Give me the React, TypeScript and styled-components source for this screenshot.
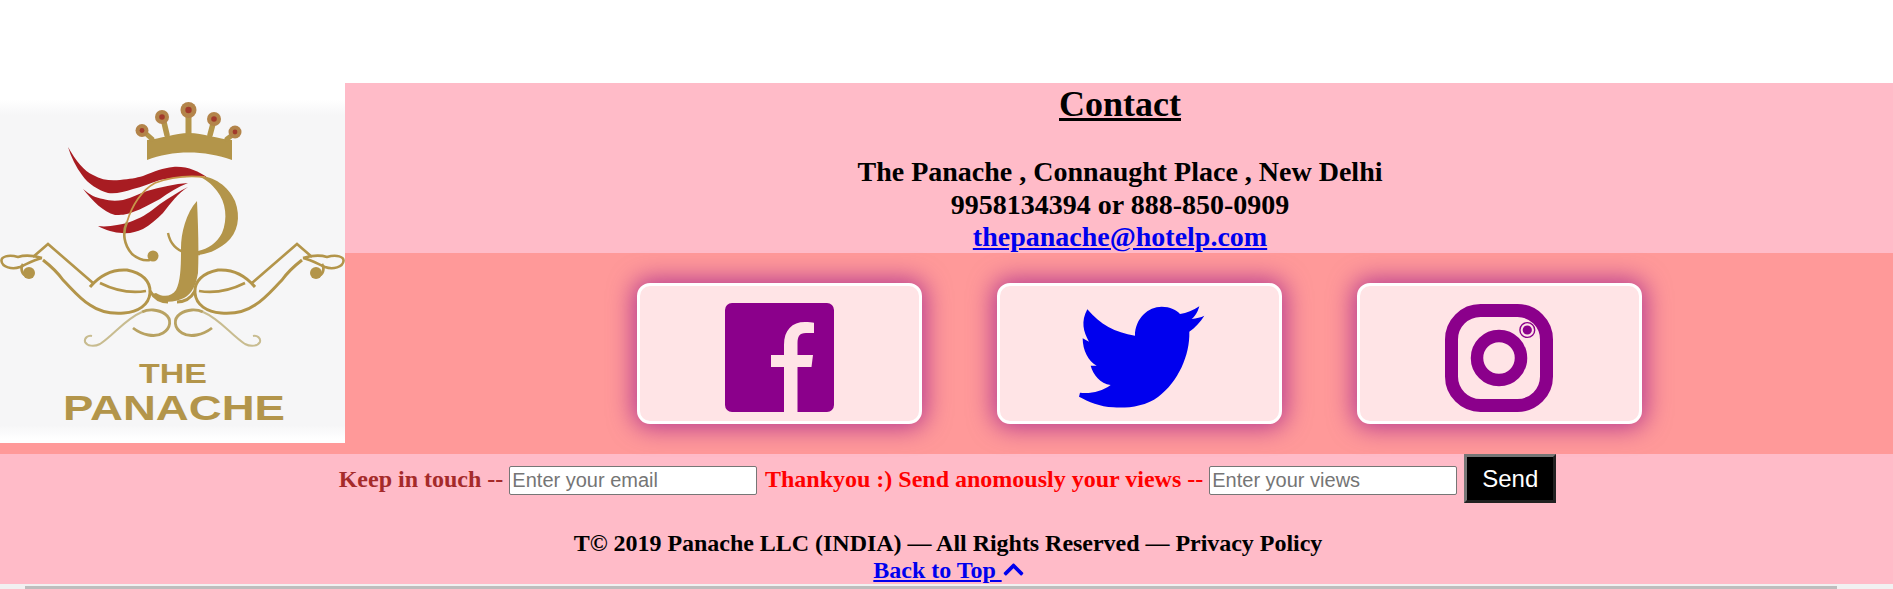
import React from "react";
import styled, { createGlobalStyle } from "styled-components";
import { FaChevronUp } from "react-icons/fa";

const Global = createGlobalStyle`
  html, body { margin: 0; padding: 0; background: #fff; overflow: hidden; }
  body { font-family: "Liberation Serif", "Times New Roman", serif; }
`;

const Page = styled.div`
  width: 1893px;
  height: 589px;
  padding-top: 83px;
  box-sizing: border-box;
  overflow: hidden;
  background: #fff;
`;

const TopGrid = styled.section`
  display: grid;
  grid-template-columns: 345px 1fr;
  background: #ff9999;
`;

const LogoColumn = styled.div`
  height: 360px;
  margin-bottom: 11px;
  background: #fff;
  line-height: 0;
`;

const RightColumn = styled.div`
  display: flex;
  flex-direction: column;
`;

const ContactPanel = styled.div`
  height: 170px;
  padding-left: 2px;
  box-sizing: border-box;
  background: #ffbbc8;
  text-align: center;
  overflow: hidden;
`;

const ContactTitle = styled.div`
  font-size: 36px;
  line-height: 42px;
  font-weight: bold;
  text-decoration: underline;
  margin-bottom: 31px;
`;

const ContactLine = styled.div`
  font-size: 28px;
  line-height: 32.5px;
  font-weight: bold;
  color: #000;
`;

const MailLink = styled.a`
  color: #0000ee;
  text-decoration: underline;
`;

const CardRow = styled.div`
  display: flex;
  justify-content: center;
  gap: 75px;
  padding: 30px 0 30px 40px;
`;

const Card = styled.a`
  width: 285px;
  height: 141px;
  box-sizing: border-box;
  padding-top: 8px;
  display: flex;
  align-items: center;
  justify-content: center;
  background: #ffe4e6;
  border: 3px solid #fff;
  border-radius: 13px;
  box-shadow: 0 0 25px 4px rgba(139, 0, 139, 0.62);
`;

const Footer = styled.footer`
  height: 130px;
  background: #ffbbc8;
  text-align: center;
  font-weight: bold;
  font-size: 24px;
`;

const FormLine = styled.form`
  height: 76px;
  margin: 0;
  padding-left: 2px;
`;

const Brown = styled.span`
  color: #a52a2a;
`;

const Red = styled.span`
  margin-left: 2px;
  color: #ff0000;
`;

const Field = styled.input`
  width: 248px;
  height: 29px;
  box-sizing: border-box;
  padding: 1px 2px;
  border: 1px solid #767676;
  border-radius: 2px;
  background: #fff;
  font-family: "Liberation Sans", Arial, sans-serif;
  font-size: 20px;
  &::placeholder { color: #757575; opacity: 1; }
`;

const SendButton = styled.button`
  padding: 8px 15px;
  margin-left: 1px;
  background: #000;
  color: #fff;
  border: 3px outset #767676;
  font-family: "Liberation Sans", Arial, sans-serif;
  font-size: 24px;
  line-height: 27px;
`;

const FooterLine = styled.div<{ $shift: number }>`
  padding-left: ${(p) => p.$shift}px;
  line-height: 27px;
  letter-spacing: -0.03px;
  color: #000;
`;

const TopLink = styled.a`
  color: #0000ee;
  text-decoration: underline;
`;

const Chevron = styled(FaChevronUp)`
  color: #0000ee;
  font-size: 23px;
  vertical-align: -3px;
`;

const BottomStrip = styled.div`
  height: 5px;
  padding-top: 2px;
  box-sizing: border-box;
  background: #f1f1f1;
`;

const Rule = styled.div`
  width: 1812px;
  height: 3px;
  margin-left: 25px;
  background: #bdbdbd;
`;

const gold = "#b3954a";

const Flourish = () => (
  <g fill="none" stroke={gold}>
    <path strokeWidth="2.6" d="M42 175 C32 172 24 172 18 174 C8 171 1 174 1.5 178 C2 184 12 187 20 184 C27 181 33 177 42 175" />
    <path strokeWidth="2.6" d="M33 174 L48 161 L93 200" />
    <path strokeWidth="3" d="M43 177 C52 184 58 190 63 197 C72 206 80 216 90 222 C100 229 112 231 124 230 C138 229 149 222 150 210 C151 198 142 190 127 187 C112 186 100 192 90 204" />
    <path strokeWidth="2.6" d="M100 200 C112 206 128 211 146 208" />
    <path strokeWidth="3" d="M150 208 C154 215 160 219 168 219" />
    <path strokeWidth="2.6" d="M23 181 C20 186 22 192 27 193" />
    <circle cx="29" cy="190" r="6" fill={gold} stroke="none" />
  </g>
);

const LogoText = styled.text`
  font-family: "Liberation Sans", Arial, sans-serif;
  font-weight: bold;
  fill: ${gold};
`;

const Logo = () => (
  <svg width="345" height="360" viewBox="0 0 345 360">
    <defs>
      <linearGradient id="logoFade" x1="0" y1="0" x2="0" y2="1">
        <stop offset="0" stopColor="#ffffff" />
        <stop offset="0.045" stopColor="#ffffff" />
        <stop offset="0.09" stopColor="#f6f6f7" />
        <stop offset="0.95" stopColor="#f6f6f7" />
        <stop offset="0.99" stopColor="#ffffff" />
      </linearGradient>
    </defs>
    <rect width="345" height="360" fill="url(#logoFade)" />

    {/* crown */}
    <path fill={gold} d="M147 57 C160 56 175 50 189 50 C203 50 218 56 232 57 L232 77 C205 67 172 67 147 77 Z" />
    <g fill="none" stroke={gold} strokeLinecap="round">
      <path strokeWidth="5" d="M152 56 L143 48" />
      <path strokeWidth="5.5" d="M167 52 L163 35" />
      <path strokeWidth="6" d="M188.5 51 L188.5 28" />
      <path strokeWidth="5.5" d="M210 52 L214 37" />
      <path strokeWidth="5" d="M227 56 L235 50" />
    </g>
    <g fill="#b3844a">
      <circle cx="142" cy="47.5" r="6.5" />
      <circle cx="162" cy="34" r="7" />
      <circle cx="188.5" cy="27" r="8" />
      <circle cx="214" cy="36" r="7" />
      <circle cx="235" cy="49" r="6.5" />
    </g>
    <g fill="#a23a2c">
      <circle cx="142" cy="47.5" r="2.4" />
      <circle cx="162" cy="34" r="2.8" />
      <circle cx="188.5" cy="27" r="3.2" />
      <circle cx="214" cy="36" r="2.8" />
      <circle cx="235" cy="49" r="2.4" />
    </g>

    {/* wings */}
    <g fill="#a81c22">
      <path d="M68 64 C76 78 84 88 93 92 C102 97 110 98 120 97 C130 96 136 95 143 93 C155 88 163 85 173 84 C187 83 198 88 208 95 C200 93 194 93 187 94 C178 94 170 95 160 97 C150 100 142 104 133 106 C124 109 116 111 108 110 C98 107 88 101 82 92 C76 84 71 74 68 64 Z" />
      <path d="M83 106 C90 112 96 115 103 116 C110 118 116 118 123 117 C132 115 140 110 147 108 C160 104 175 101 188 100 C178 104 168 110 160 116 C150 121 142 126 133 129 C126 132 120 132 115 132 C103 129 93 118 83 106 Z" />
      <path d="M98 143 C105 144 111 143 117 142 C125 141 131 139 137 136 C147 132 153 126 160 121 C170 114 180 108 188 104 C178 110 171 120 163 130 C157 136 150 142 143 146 C136 149 129 151 122 150 C115 150 105 147 98 143 Z" />
    </g>

    {/* P */}
    <path fill={gold} d="M198 93 C214 93 228 103 235 118 C241 134 238 150 226 160 C216 168 207 171 198 172 L198 168 C208 166 217 160 222 150 C228 136 226 119 217 108 C211 100 205 96 198 93 Z" />
    <path fill="none" stroke="#c8964a" strokeWidth="1.8" d="M127 139 C132 122 142 107 155 100 C170 94 185 92 205 94" />
    <path fill="none" stroke={gold} strokeWidth="2.6" d="M127 139 C122 150 124 162 132 171 C138 176 144 178 150 177" />
    <circle cx="153" cy="173" r="5.5" fill={gold} />
    <path fill="none" stroke={gold} strokeWidth="2.4" d="M168 150 C170 160 176 167 186 170 C190 171 195 171 200 171" />
    <path fill={gold} d="M197 118 C198 140 199 165 198 190 C196 202 192 211 184 215 C176 219 166 220 158 217 L152 211 L156 210 C164 215 172 213 176 207 C181 198 181 180 181 165 C181 150 186 130 197 118 Z" />

    {/* flourishes */}
    <Flourish />
    <g transform="translate(345 0) scale(-1 1)">
      <Flourish />
    </g>
    <g fill="none" stroke="#b8a262" strokeWidth="2">
      <path strokeWidth="2.8" d="M133 245 C142 252 155 255 163 250 C171 245 172 236 165 231 C158 226 148 226 142 229" />
      <path d="M142 229 C125 236 114 252 100 261 C94 264 87 263 85 259 C84 255 88 252 92 253" stroke="#c8bc90" />
      <path strokeWidth="2.8" d="M212 245 C203 252 190 255 182 250 C174 245 173 236 180 231 C187 226 197 226 203 229" />
      <path d="M203 229 C220 236 231 252 245 261 C251 264 258 263 260 259 C261 255 257 252 253 253" stroke="#c8bc90" />
    </g>

    {/* wordmark */}
    <LogoText x="139" y="300" fontSize="28" textLength="68" lengthAdjust="spacingAndGlyphs">THE</LogoText>
    <LogoText x="63" y="337" fontSize="35" textLength="222" lengthAdjust="spacingAndGlyphs">PANACHE</LogoText>
  </svg>
);

const FacebookIcon = () => (
  <svg width="109" height="109" viewBox="0 0 109 109">
    <path
      fill="#8b008b"
      fillRule="evenodd"
      d="M7 0 H102 A7 7 0 0 1 109 7 V102 A7 7 0 0 1 102 109 H72.5 V64 H86.5 L88 52 H72.5 V40 C72.5 34 74 30 81 30 H89 V19.7 C87 19.3 84 19 80 19 C67 19 59 27 59 42 V52 H46 V64 H59 V109 H7 A7 7 0 0 1 0 102 V7 A7 7 0 0 1 7 0 Z"
    />
  </svg>
);

const BirdSvg = styled.svg`
  margin: 0 0 6px 6px;
`;

const TwitterIcon = () => (
  <BirdSvg width="145" height="120" viewBox="0 0 435 360">
    <path
      fill="#0000ee"
      d="M52 43 C90 88 135 113 195 122 C195 70 235 35 275 35 C300 35 320 45 330 57 C350 55 370 45 388 34 C383 50 378 62 365 72 C380 70 392 67 403 62 C392 80 375 98 358 110 C360 180 325 260 265 305 C225 335 170 340 130 337 C90 335 55 320 27 305 L30 293 C60 297 95 290 122 270 C90 265 70 240 62 212 L80 212 C55 200 38 165 38 130 L57 140 C40 110 32 80 52 43 Z"
    />
  </BirdSvg>
);

const InstagramIcon = () => (
  <svg width="108" height="108" viewBox="0 0 108 108">
    <g fill="none" stroke="#8b008b">
      <rect x="6.5" y="6.5" width="95" height="95" rx="29" strokeWidth="13" />
      <circle cx="54" cy="54" r="22" strokeWidth="12.5" />
      <circle cx="82.3" cy="26" r="7.4" strokeWidth="1.4" />
    </g>
    <circle cx="82.3" cy="26" r="4.6" fill="#8b008b" />
  </svg>
);

export default function App() {
  return (
    <Page>
      <Global />
      <TopGrid>
        <LogoColumn>
          <Logo />
        </LogoColumn>
        <RightColumn>
          <ContactPanel>
            <ContactTitle>Contact</ContactTitle>
            <ContactLine>The Panache , Connaught Place , New Delhi</ContactLine>
            <ContactLine>9958134394 or 888-850-0909</ContactLine>
            <ContactLine>
              <MailLink href="#">thepanache@hotelp.com</MailLink>
            </ContactLine>
          </ContactPanel>
          <CardRow>
            <Card href="#" aria-label="Facebook">
              <FacebookIcon />
            </Card>
            <Card href="#" aria-label="Twitter">
              <TwitterIcon />
            </Card>
            <Card href="#" aria-label="Instagram">
              <InstagramIcon />
            </Card>
          </CardRow>
        </RightColumn>
      </TopGrid>
      <Footer>
        <FormLine onSubmit={(e) => e.preventDefault()}>
          <Brown>Keep in touch -- </Brown>
          <Field type="email" placeholder="Enter your email" />
          <Red> Thankyou :) Send anomously your views -- </Red>
          <Field type="text" placeholder="Enter your views" />{" "}
          <SendButton type="submit">Send</SendButton>
        </FormLine>
        <FooterLine $shift={3}>T© 2019 Panache LLC (INDIA) — All Rights Reserved — Privacy Policy</FooterLine>
        <FooterLine $shift={5}>
          <TopLink href="#">
            Back to Top <Chevron />
          </TopLink>
        </FooterLine>
      </Footer>
      <BottomStrip>
        <Rule />
      </BottomStrip>
    </Page>
  );
}
